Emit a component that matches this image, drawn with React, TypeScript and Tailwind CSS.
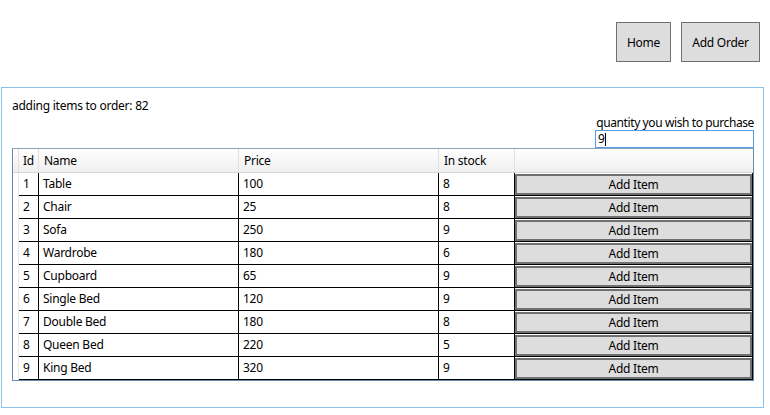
import React from "react";

const items: [number, string, number, number][] = [
  [1, "Table", 100, 8],
  [2, "Chair", 25, 8],
  [3, "Sofa", 250, 9],
  [4, "Wardrobe", 180, 6],
  [5, "Cupboard", 65, 9],
  [6, "Single Bed", 120, 9],
  [7, "Double Bed", 180, 8],
  [8, "Queen Bed", 220, 5],
  [9, "King Bed", 320, 9],
];

export default function App() {
  return (
    <div
      className="w-[770px] h-[415px] bg-white text-[12px] tracking-[-0.25px] text-black overflow-hidden"
      style={{ fontFamily: '"Segoe UI", "Noto Sans", sans-serif' }}
    >
      <div className="h-[87px] flex justify-end gap-[10px] pt-[22px] pr-[10px]">
        <button className="w-[55px] h-[40px] bg-[#dddddd] border border-[#707070] text-[12px] pt-[2px]">
          Home
        </button>
        <button className="w-[79px] h-[40px] bg-[#dddddd] border border-[#707070] text-[12px] pt-[2px]">
          Add Order
        </button>
      </div>
      <div className="ml-[1px] w-[763px] h-[321px] bg-[#8ac2ee] p-[1px]">
        <div className="w-full h-full bg-white pl-[10px] pr-[9px] pt-[10px] flex flex-col">
          <div className="h-[16px] leading-[16px] whitespace-nowrap">adding items to order: 82</div>
          <div className="flex flex-col items-end">
            <div className="w-[170px] h-[16px] leading-[17px] whitespace-nowrap text-right tracking-[-0.4px]">
              quantity you wish to purchase
            </div>
            <div className="w-[159px] h-[18px] border border-[#569de5] flex items-center pl-[2px] leading-[16px]">
              <span>9</span>
              <span className="w-[1px] h-[13px] bg-black"></span>
            </div>
          </div>
          <div className="w-[742px] border border-[#688caf] border-t-[#8aa4bf]">
            <div className="h-[24px] flex bg-gradient-to-b from-white to-[#efefef] border-b border-[#d5d5d5]">
              <div className="w-[6px] border-r border-[#e0e0e0]"></div>
              <div className="w-[20px] border-r border-[#e0e0e0] pl-[4px] leading-[24px]">Id</div>
              <div className="w-[200px] border-r border-[#e0e0e0] pl-[5px] leading-[24px]">Name</div>
              <div className="w-[200px] border-r border-[#e0e0e0] pl-[5px] leading-[24px]">Price</div>
              <div className="w-[76px] border-r border-[#e0e0e0] pl-[5px] leading-[24px]">In stock</div>
              <div className="flex-1"></div>
            </div>
            {items.map(([id, name, price, stock]) => (
              <div key={id} className="h-[23px] flex">
                <div className="w-[6px] border-r border-[#e8e8e8]"></div>
                <div className="w-[20px] border-r border-b border-black pl-[4px] leading-[22px]">{id}</div>
                <div className="w-[200px] border-r border-b border-black pl-[4px] leading-[22px] whitespace-nowrap">{name}</div>
                <div className="w-[200px] border-r border-b border-black pl-[4px] leading-[22px]">{price}</div>
                <div className="w-[76px] border-r border-b border-black pl-[4px] leading-[22px]">{stock}</div>
                <div className="w-[238px] border-r border-b border-black pt-[1px]">
                  <button className="w-full h-[21px] bg-[#dddddd] border-2 border-[#707070] text-[12px] leading-[17px] flex items-center justify-center">
                    Add Item
                  </button>
                </div>
              </div>
            ))}
          </div>
        </div>
      </div>
    </div>
  );
}
